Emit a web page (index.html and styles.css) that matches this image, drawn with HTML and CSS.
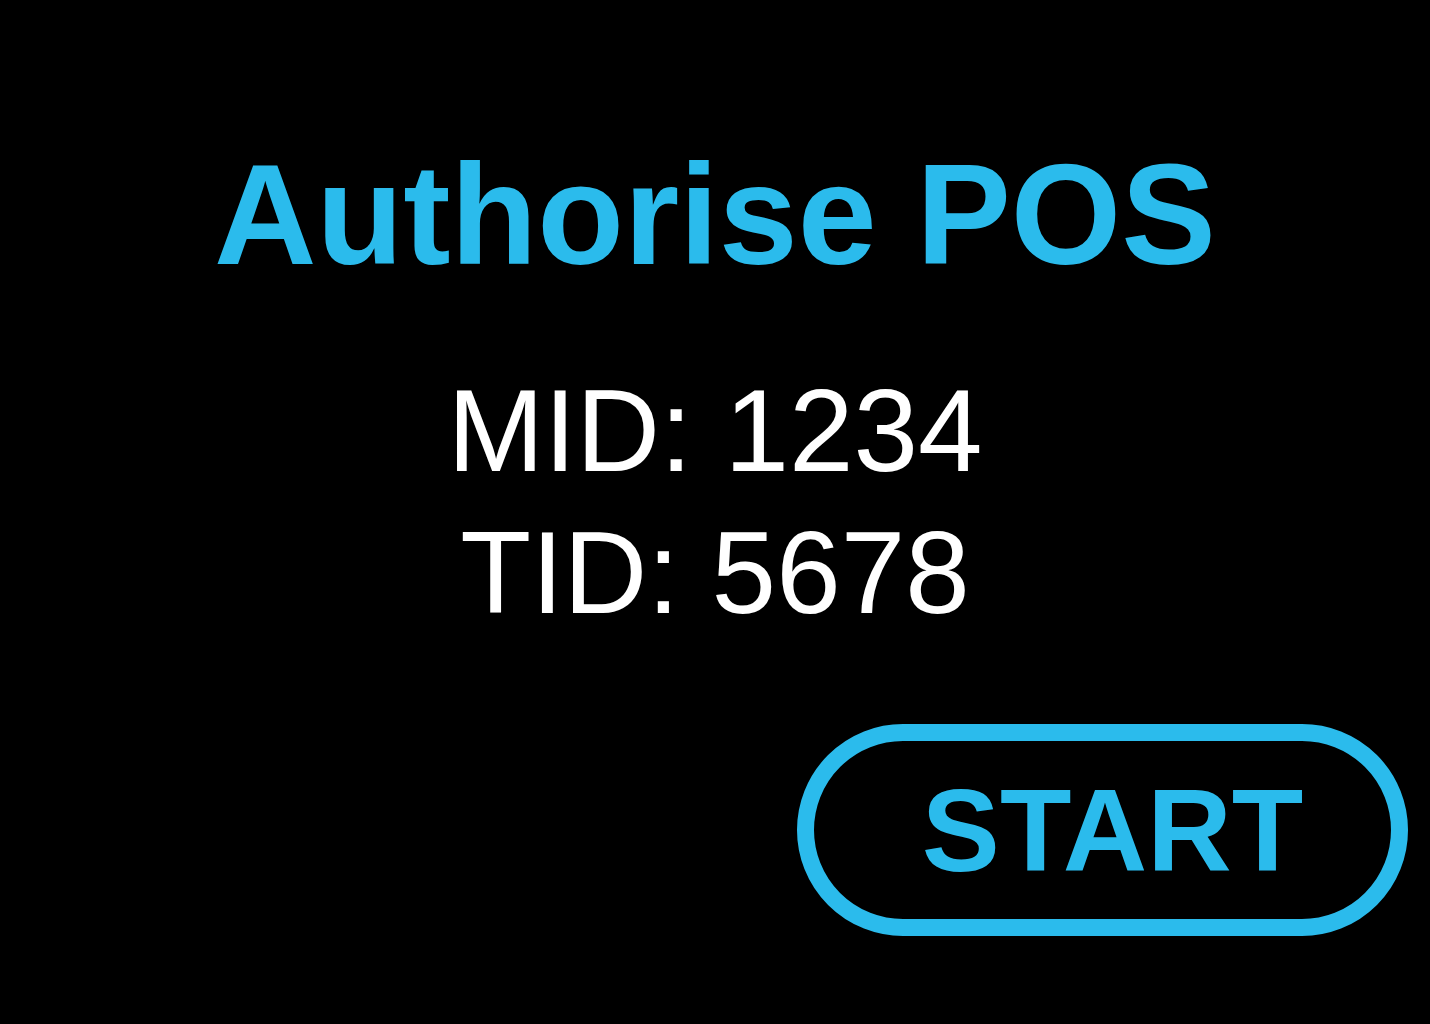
FILE: index.html
```html
<!DOCTYPE html>
<html lang="en">
<head>
<meta charset="utf-8">
<title>Authorise POS</title>
<link rel="stylesheet" href="styles.css">
</head>
<body>
<main class="screen">
  <h1 class="title">Authorise POS</h1>
  <div class="ids">
    <div class="id-line">MID: 1234</div>
    <div class="id-line">TID: 5678</div>
  </div>
  <div class="actions">
    <button class="start-btn" type="button">START</button>
  </div>
</main>
</body>
</html>
```

FILE: styles.css
```css
html, body {
  margin: 0;
  padding: 0;
  background: #000;
  height: 100%;
}

body {
  font-family: "Liberation Sans", Arial, sans-serif;
  color: #fff;
}

.screen {
  display: flex;
  flex-direction: column;
  align-items: center;
  padding-top: 133px;
  box-sizing: border-box;
  height: 1024px;
  overflow: hidden;
}

.title {
  margin: 0;
  font-size: 142px;
  font-weight: 700;
  line-height: normal;
  color: #2bbbec;
  letter-spacing: 0;
}

.ids {
  margin-top: 63px;
  display: flex;
  flex-direction: column;
  align-items: center;
}

.id-line {
  font-size: 116px;
  line-height: 142px;
  font-weight: 400;
  color: #fff;
}

.actions {
  align-self: stretch;
  display: flex;
  justify-content: flex-end;
  padding-right: 22px;
  margin-top: 80px;
}

.start-btn {
  width: 611px;
  height: 212px;
  box-sizing: border-box;
  border: 17px solid #2bbbec;
  border-radius: 106px;
  background: #000;
  color: #2bbbec;
  font-family: "Liberation Sans", Arial, sans-serif;
  font-size: 117px;
  font-weight: 700;
  padding: 0 0 0 20px;
  line-height: 1;
  display: flex;
  align-items: center;
  justify-content: center;
}
```
